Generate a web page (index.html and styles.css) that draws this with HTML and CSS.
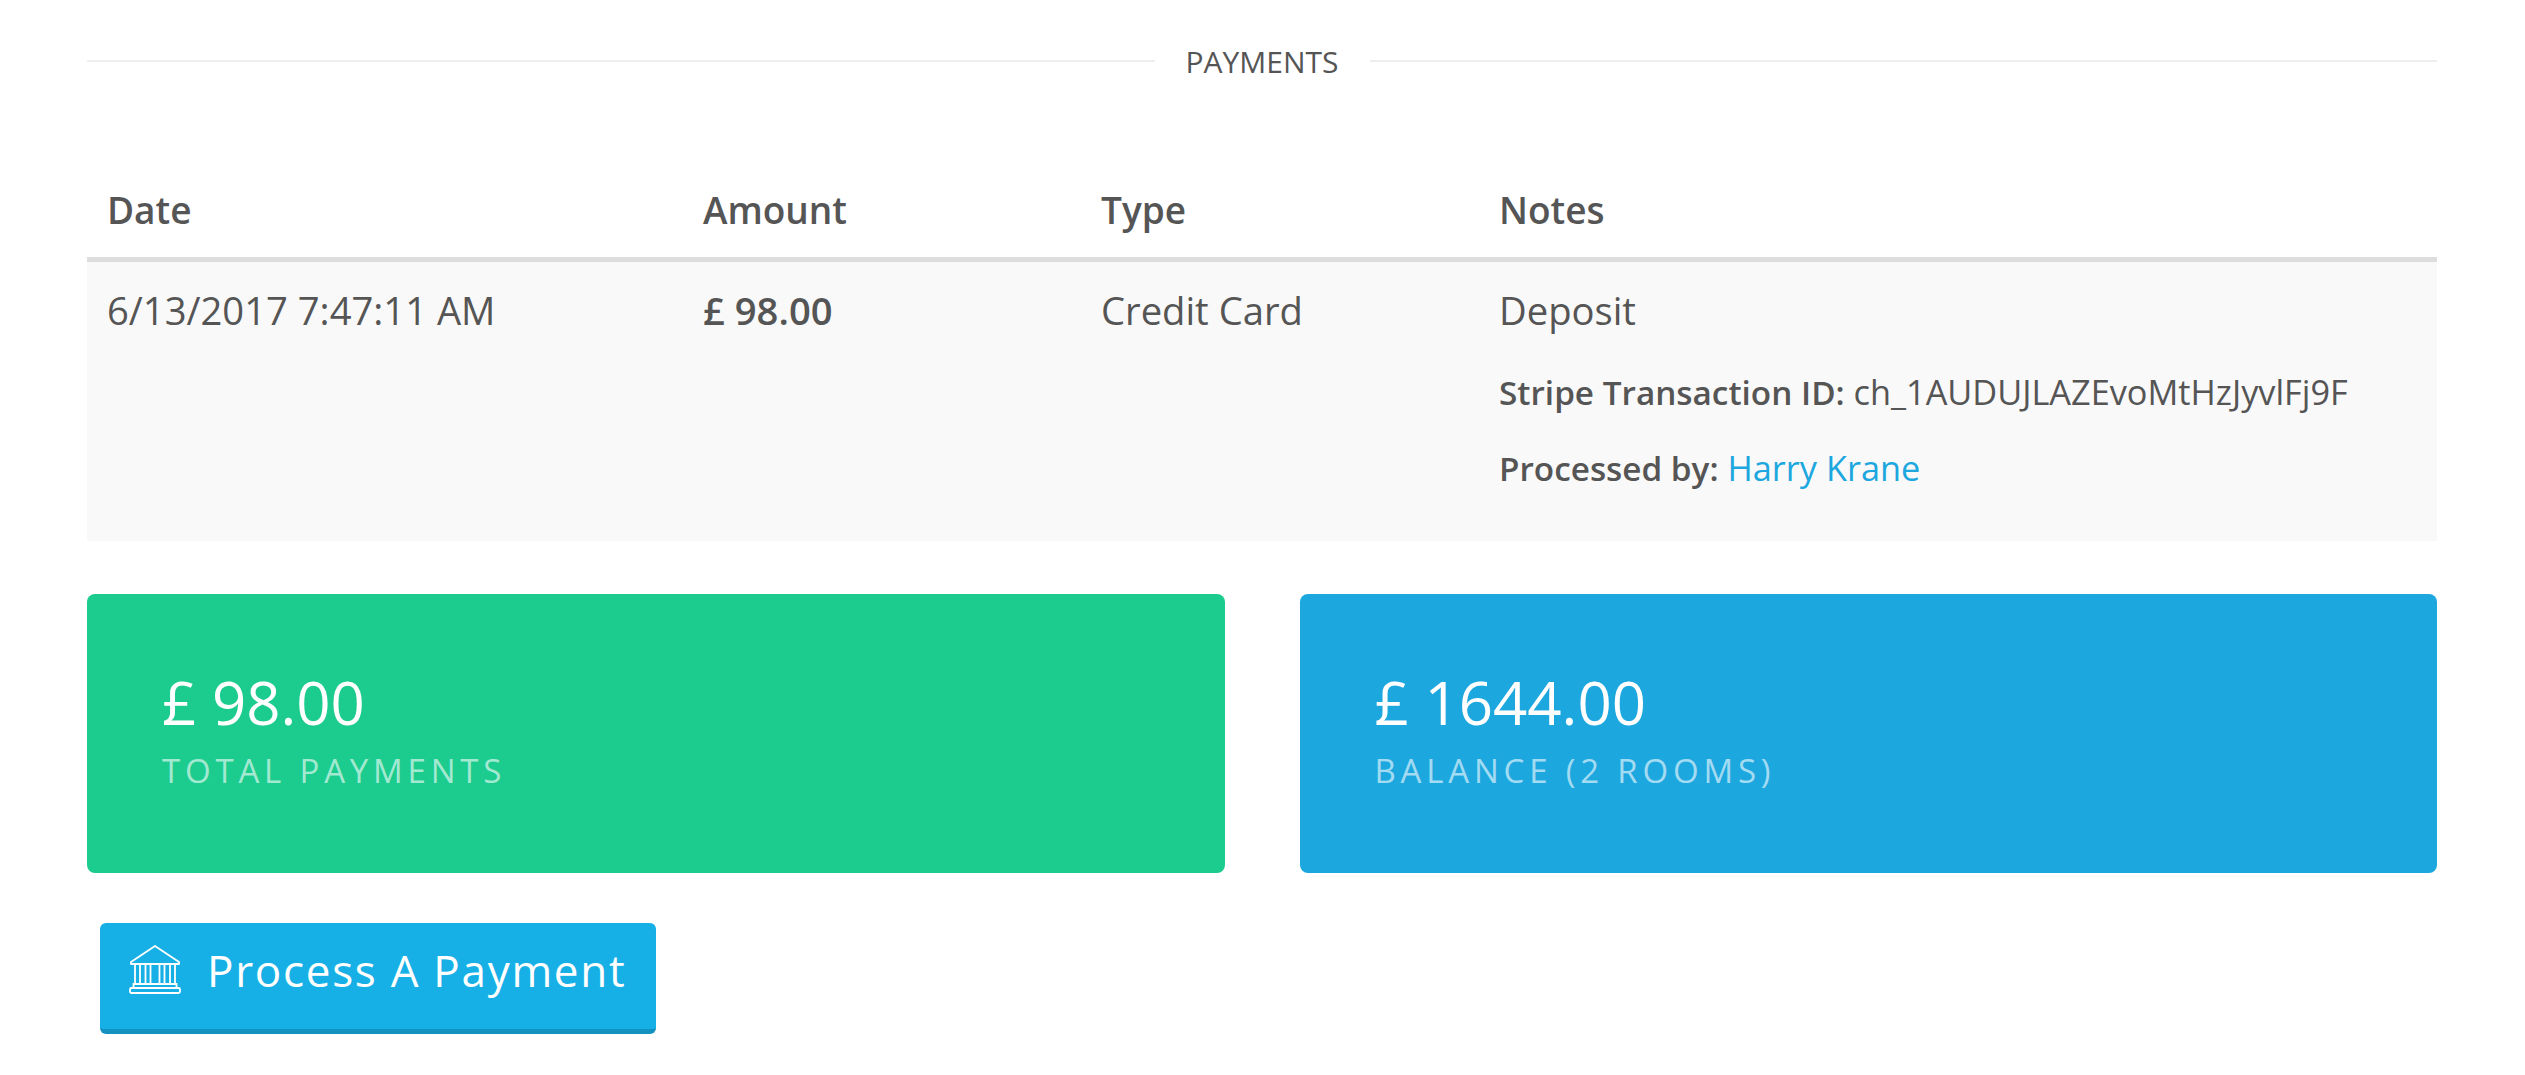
FILE: index.html
```html
<!DOCTYPE html>
<html lang="en">
<head>
  <meta charset="UTF-8" />
  <title>Payments</title>
  <link rel="stylesheet" href="styles.css">
</head>
<body>
  <div class="section-title">
    <span>PAYMENTS</span>
  </div>

  <table class="payments">
    <thead>
      <tr>
        <th class="col-date">Date</th>
        <th class="col-amount">Amount</th>
        <th class="col-type">Type</th>
        <th>Notes</th>
      </tr>
    </thead>
    <tbody>
      <tr>
        <td>6/13/2017 7:47:11 AM</td>
        <td class="amount">£ 98.00</td>
        <td>Credit Card</td>
        <td>
          <div>Deposit</div>
          <p class="note"><strong>Stripe Transaction ID:</strong> ch_1AUDUJLAZEvoMtHzJyvlFj9F</p>
          <p class="note"><strong>Processed by:</strong> <a href="#">Harry Krane</a></p>
        </td>
      </tr>
    </tbody>
  </table>

  <div class="totals">
    <div class="total-card green">
      <div class="total-value">£ 98.00</div>
      <div class="total-label">TOTAL PAYMENTS</div>
    </div>
    <div class="total-card blue">
      <div class="total-value">£ 1644.00</div>
      <div class="total-label">BALANCE (2 ROOMS)</div>
    </div>
  </div>

  <button class="pay-button">
    <svg class="bank-icon" viewBox="0 0 52 49" width="52" height="49" fill="none" stroke="#fff" stroke-width="1.800">
      <path d="M26 1 L50 17 V19 H2 V17 Z" stroke-linejoin="round" />
      <path d="M6 19 V39 M11 19 V39 M16.500 19 V39 M21.500 19 V39 M30.500 19 V39 M35.500 19 V39 M41 19 V39 M46 19 V39" />
      <path d="M4.500 39 H47.500 V43 H4.500 Z" />
      <rect x="1" y="43" width="50" height="5" rx="1.500" />
    </svg>
    <span>Process A Payment</span>
  </button>
</body>
</html>
```

FILE: styles.css
```css
* {
  box-sizing: border-box;
}

body {
  margin: 0;
  padding: 0 88px 0 87px;
  background: #fff;
  color: #555;
  font-family: "Open Sans", sans-serif;
}

.section-title {
  display: flex;
  align-items: center;
  height: 48px;
  margin-top: 37px;
  font-size: 30px;
  color: #555;
}

.section-title::before,
.section-title::after {
  content: "";
  flex: 1;
  height: 2px;
  background: #eee;
}

.section-title span {
  padding: 0 31px;
}

.payments {
  width: 100%;
  margin-top: 100px;
  border-collapse: collapse;
  table-layout: fixed;
  font-size: 38.200px;
}

.payments th {
  padding: 0 20px 23px;
  font-size: 37px;
  font-weight: 600;
  text-align: left;
  border-bottom: 5px solid #ddd;
  line-height: 49px;
}

.col-date {
  width: 596px;
}

.col-amount,
.col-type {
  width: 398px;
}

.payments td {
  padding: 24px 20px 49px;
  vertical-align: top;
  background: #f9f9f9;
  line-height: 49px;
}

.amount {
  font-weight: 600;
}

.note {
  margin: 33px 0 0;
  font-size: 34.300px;
  line-height: 48px;
}

.note:last-child {
  margin-top: 28px;
}

.note strong {
  font-size: 33.300px;
  font-weight: 600;
}

.note a {
  color: #1ca7df;
  text-decoration: none;
}

.totals {
  display: flex;
  gap: 75px;
  margin-top: 53px;
}

.total-card {
  flex: 1;
  height: 279px;
  padding: 70px 75px 0;
  border-radius: 8px;
  color: #fff;
}

.green {
  background: #1ccb8e;
}

.blue {
  background: #1ca7df;
}

.total-value {
  font-size: 60px;
  line-height: 76px;
}

.total-label {
  margin-top: 8px;
  font-size: 33px;
  letter-spacing: 4.800px;
  color: rgba(255, 255, 255, 0.6);
}

.pay-button {
  display: flex;
  align-items: center;
  gap: 26px;
  width: 556px;
  height: 111px;
  margin: 50px 0 0 13px;
  padding: 0 0 13px 29px;
  border: none;
  border-bottom: 5px solid #1391c0;
  border-radius: 6px;
  background: #17b0e6;
  color: #fff;
  font-family: inherit;
  font-size: 44px;
  letter-spacing: 1.700px;
}
```
